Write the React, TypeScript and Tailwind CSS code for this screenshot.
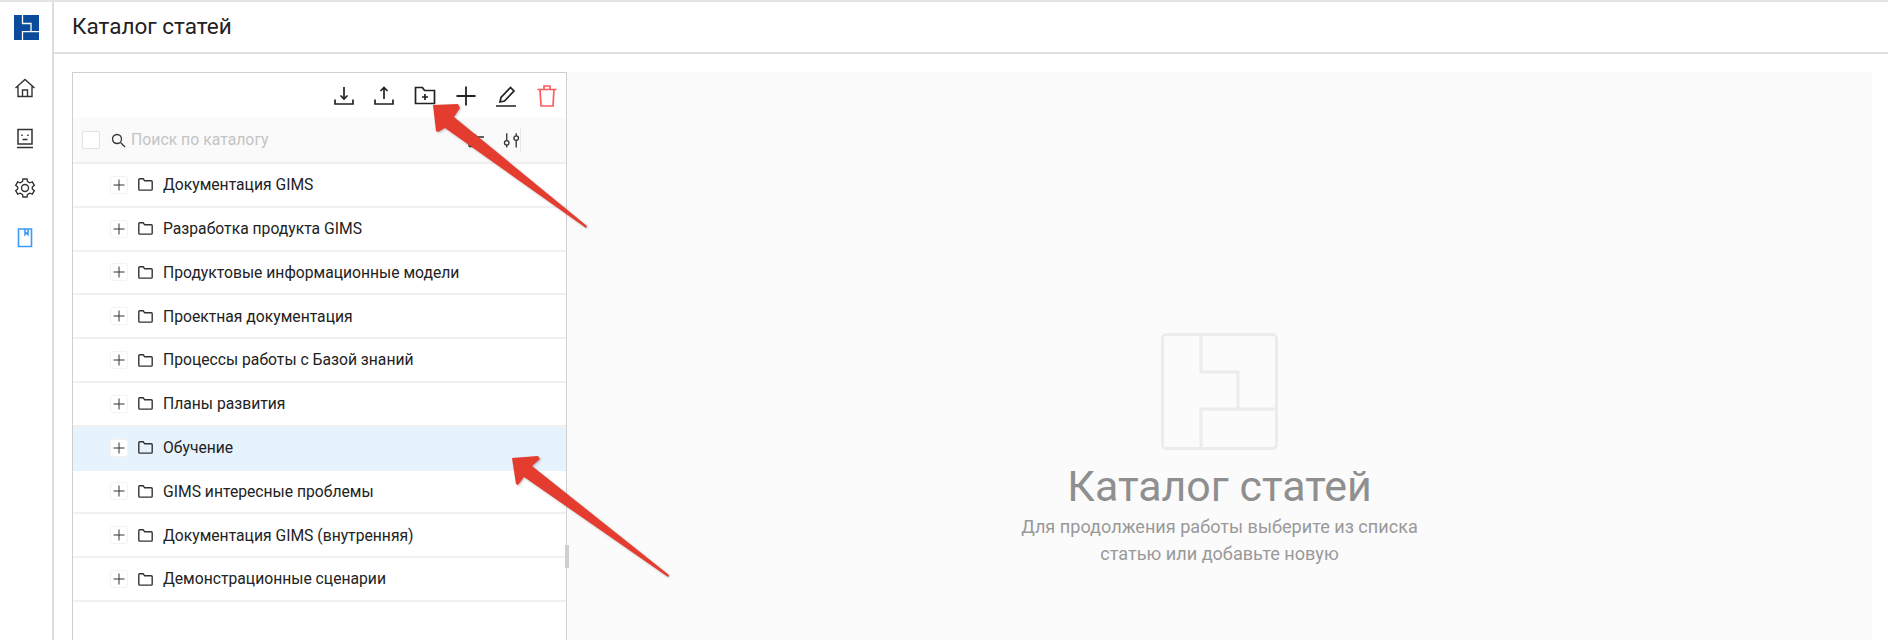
const folders = [
  "Документация GIMS",
  "Разработка продукта GIMS",
  "Продуктовые информационные модели",
  "Проектная документация",
  "Процессы работы с Базой знаний",
  "Планы развития",
  "Обучение",
  "GIMS интересные проблемы",
  "Документация GIMS (внутренняя)",
  "Демонстрационные сценарии",
]

function Logo() {
  return (
    <svg width="25" height="25" viewBox="0 0 25 25">
      <rect width="25" height="25" fill="#0b4b9b" />
      <path d="M8.5 0V8.5H17V16.7H8.5V25M8.5 16.7H25" fill="none" stroke="#fff" strokeWidth="1.3" />
    </svg>
  )
}

function ToolIcon({ d, color = "#222" }: { d: string; color?: string }) {
  return (
    <svg width="24" height="24" viewBox="0 0 24 24" fill="none" stroke={color} strokeWidth="1.7">
      <path d={d} />
    </svg>
  )
}

function Row({ title, active }: { title: string; active: boolean }) {
  return (
    <div
      className={`flex h-[43.8px] items-center border-b-2 pl-[37px] ${
        active ? "border-[#e6f2fc] bg-[#e6f2fc]" : "border-[#f0f0f0] bg-white"
      }`}
    >
      <span className="flex h-[18px] w-[18px] items-center justify-center rounded-[3px] border border-[#f3f3f3] bg-white">
        <svg width="12" height="12" viewBox="0 0 12 12" stroke="#333" strokeWidth="1">
          <path d="M6 .5V11.5M.5 6H11.5" />
        </svg>
      </span>
      <svg className="ml-[10px]" width="15" height="13" viewBox="0 0 15 13" fill="none" stroke="#333" strokeWidth="1.4">
        <path d="M.8 11.2V1.7Q.8.8 1.7.8H5.2L6.7 2.8H13.3Q14.2 2.8 14.2 3.7V11.2Q14.2 12.1 13.3 12.1H1.7Q.8 12.1.8 11.2Z" />
      </svg>
      <span className="ml-[10px] text-[15.7px] text-[#222]">{title}</span>
    </div>
  )
}

export default function App() {
  return (
    <div className="relative flex h-[640px] overflow-hidden border-t-2 border-[#e4e4e4] bg-white font-['Roboto',sans-serif]">
      {/* left rail */}
      <aside className="flex w-[54px] shrink-0 flex-col items-center border-r-2 border-[#dcdcdc]">
        <div className="mt-[13px]">
          <Logo />
        </div>
        <div className="mt-[36px] mr-[2px] flex flex-col items-center gap-[26px]">
          <svg width="24" height="24" viewBox="0 0 24 24" fill="none" stroke="#333" strokeWidth="1.4">
            <path d="M2.5 12 12 3.5 21.5 12M5 10V20.5H19V10M9.5 20.5V14H14.5V20.5" />
          </svg>
          <svg width="24" height="24" viewBox="0 0 24 24" fill="none" stroke="#333" strokeWidth="1.5">
            <path d="M5 3.5H19V18H5ZM4 21.5H20M9 8.5V10M15 8.5V10M9.5 13.5H14.5" />
          </svg>
          <svg width="24" height="24" viewBox="0 0 24 24" fill="none" stroke="#333" strokeWidth="1.4">
            <path d="M10 3H14L14.6 5.6 16.8 6.8 19.3 5.9 21.3 9.3 19.3 11V13L21.3 14.7 19.3 18.1 16.8 17.2 14.6 18.4 14 21H10L9.4 18.4 7.2 17.2 4.7 18.1 2.7 14.7 4.7 13V11L2.7 9.3 4.7 5.9 7.2 6.8 9.4 5.6Z" />
            <circle cx="12" cy="12" r="3.5" />
          </svg>
          <svg width="24" height="24" viewBox="0 0 24 24" fill="none" stroke="#3b9bf5" strokeWidth="1.6">
            <path d="M5.5 3H18.5V20.5H5.5ZM12 3V8.5L13.5 7 15 8.5V3" />
          </svg>
        </div>
      </aside>

      <div className="flex min-w-0 flex-1 flex-col">
        <header className="flex h-[52px] shrink-0 items-center border-b-2 border-[#e0e0e0] pl-[18px] text-[22.5px] text-[#222]">
          Каталог статей
        </header>

        <main className="flex min-h-0 flex-1 pt-[18px] pr-[16px] pl-[18px]">
          {/* catalog tree */}
          <section className="relative w-[495px] shrink-0 border-x border-t border-[#cfcfcf]">
            <div className="flex h-[45px] items-center justify-end gap-[16.7px] pr-[7px]">
              <ToolIcon d="M12 3V15M8.5 11.5 12 15 15.5 11.5M3 15.5V20H21V15.5" />
              <ToolIcon d="M12 15V3.5M8.5 7 12 3.5 15.5 7M3 15.500V20H21V15.5" />
              <ToolIcon d="M2.5 19.5V3.5H9.5L11.5 6.5H21.5V19.5ZM12 10V16M9 13H15" />
              <svg width="24" height="24" viewBox="0 0 24 24" stroke="#222" strokeWidth="1.8">
                <path d="M12 2.5V21.5M2.500 12H21.5" />
              </svg>
              <ToolIcon d="M2 22H22M6 18 7 13.5 16.5 3.5 20 7 10.5 17Z" />
              <ToolIcon color="#ff5b5f" d="M2.5 5.500H21.5M9 5.500V2H15V5.500M5 5.500 6 22H18L19 5.500" />
            </div>

            <div className="flex h-[46px] items-center border-b-2 border-[#efefef] bg-[#fafafa] pl-[9px]">
              <span className="h-[18px] w-[18px] rounded-[2px] border border-[#e2e2e2] bg-white" />
              <svg className="ml-[11px]" width="15" height="15" viewBox="0 0 15 15" fill="none" stroke="#333" strokeWidth="1.3">
                <circle cx="6" cy="6" r="4.5" />
                <path d="M9.5 9.5 14 14" />
              </svg>
              <span className="ml-[5px] text-[15.8px] text-[#c4c4c4]">Поиск по каталогу</span>
              <div className="mr-[45px] ml-auto flex items-center gap-[14px]">
                <svg width="21" height="20" viewBox="0 0 21 20" fill="none" stroke="#333" strokeWidth="1.3">
                  <path d="M2 16.5V5H8L10 7H17M2 16.5H19" />
                </svg>
                <svg className="border-r border-[#e8e8e8]" width="19" height="24" viewBox="0 0 19 24" fill="none" stroke="#333" strokeWidth="1.4">
                  <circle cx="5" cy="15" r="2.4" />
                  <circle cx="15" cy="10" r="2.4" />
                  <path d="M5 5V12.6M5 17.4V20M15 5V7.6M15 12.4V20" />
                </svg>
              </div>
            </div>

            {folders.map((title) => (
              <Row key={title} title={title} active={title === "Обучение"} />
            ))}

            <span className="absolute top-[472px] -right-[3px] h-[23px] w-[4px] bg-[#cfcfcf]" />
          </section>

          {/* empty state */}
          <section className="flex flex-1 flex-col items-center bg-[#fbfbfb] pt-[261px]">
            <svg width="117" height="117" viewBox="0 0 117 117" fill="none" stroke="#ececec" strokeWidth="3">
              <rect x="1.5" y="1.5" width="114" height="114" rx="4" />
              <path d="M40 1.5V39H77V76H40V115.5M77 76H115.5" />
            </svg>
            <h1 className="mt-[10px] text-[42.9px] leading-[53px] font-normal text-[#8f8f8f]">Каталог статей</h1>
            <p className="text-center text-[18.1px] leading-[27px] text-[#999999]">
              Для продолжения работы выберите из списка
              <br />
              статью или добавьте новую
            </p>
          </section>
        </main>
      </div>

      {/* arrows drawn over the screenshot */}
      <svg className="pointer-events-none absolute top-[-2px] left-0 drop-shadow-[1px_1px_1px_rgba(0,0,0,0.25)]" width="1888" height="640">
        <path d="M433 105 458 104 460 108 454 117 587 226 586 228 445 128 438 132 436 131Z" fill="#e53c30" />
        <path d="M512 458 538 456 540 459 532 466 669 575 668 577 524 477 518 485 516 484Z" fill="#e53c30" />
      </svg>
    </div>
  )
}
